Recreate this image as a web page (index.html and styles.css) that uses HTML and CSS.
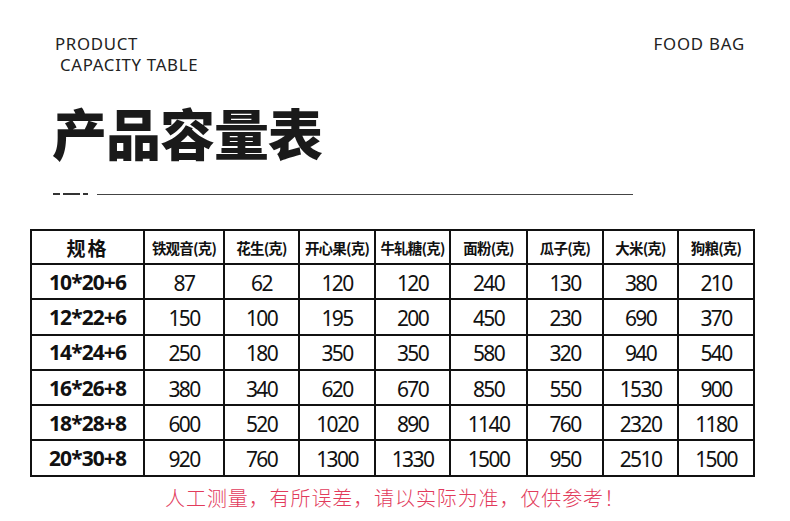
FILE: index.html
```html
<!DOCTYPE html>
<html lang="zh-CN">
<head>
<meta charset="utf-8">
<link rel="stylesheet" href="styles.css">
</head>
<body>
<div class="page">
  <header class="top">
    <div class="en-title">
      <div>PRODUCT</div>
      <div class="indent">CAPACITY TABLE</div>
    </div>
    <div class="brand">FOOD BAG</div>
  </header>
  <h1 class="title">产品容量表</h1>
  <div class="rule">
    <span class="dash d1"></span><span class="dash d2"></span><span class="dash d3"></span>
    <span class="line"></span>
  </div>
  <table class="cap">
    <colgroup>
      <col class="c0"><col class="c1"><col class="c2"><col class="c3"><col class="c4"><col class="c5"><col class="c6"><col class="c7"><col class="c8">
    </colgroup>
    <thead>
      <tr>
        <th class="spec-h">规格</th>
        <th>铁观音(克)</th><th>花生(克)</th><th>开心果(克)</th><th>牛轧糖(克)</th><th>面粉(克)</th><th>瓜子(克)</th><th>大米(克)</th><th>狗粮(克)</th>
      </tr>
    </thead>
    <tbody>
      <tr><td class="spec">10*20+6</td><td>87</td><td>62</td><td>120</td><td>120</td><td>240</td><td>130</td><td>380</td><td>210</td></tr>
      <tr><td class="spec">12*22+6</td><td>150</td><td>100</td><td>195</td><td>200</td><td>450</td><td>230</td><td>690</td><td>370</td></tr>
      <tr><td class="spec">14*24+6</td><td>250</td><td>180</td><td>350</td><td>350</td><td>580</td><td>320</td><td>940</td><td>540</td></tr>
      <tr><td class="spec">16*26+8</td><td>380</td><td>340</td><td>620</td><td>670</td><td>850</td><td>550</td><td>1530</td><td>900</td></tr>
      <tr><td class="spec">18*28+8</td><td>600</td><td>520</td><td>1020</td><td>890</td><td>1140</td><td>760</td><td>2320</td><td>1180</td></tr>
      <tr><td class="spec">20*30+8</td><td>920</td><td>760</td><td>1300</td><td>1330</td><td>1500</td><td>950</td><td>2510</td><td>1500</td></tr>
    </tbody>
  </table>
  <p class="note">人工测量，有所误差，请以实际为准，仅供参考！</p>
</div>
</body>
</html>
```
FILE: styles.css
```css
html, body {
  margin: 0;
  padding: 0;
  background: #fff;
}
body {
  font-family: "Noto Sans", "Noto Sans CJK SC", sans-serif;
  color: #111;
}
.page {
  width: 790px;
  height: 521px;
  overflow: hidden;
  position: relative;
}
.top {
  display: flex;
  justify-content: space-between;
  padding: 33px 45px 0 55px;
}
.en-title {
  font-size: 16.8px;
  line-height: 21px;
  letter-spacing: 0.7px;
  color: #222;
}
.en-title .indent {
  padding-left: 5px;
}
.brand {
  font-size: 16.8px;
  line-height: 21px;
  letter-spacing: 0.8px;
  color: #222;
}
.title {
  margin: 26px 0 0 52px;
  font-family: "Noto Sans CJK SC", sans-serif;
  font-weight: 900;
  font-size: 55px;
  line-height: 60px;
  letter-spacing: -1px;
  color: #1a1a1a;
}
.rule {
  display: flex;
  align-items: center;
  margin: 31px 0 0 53px;
  width: 580px;
  height: 4px;
}
.dash {
  height: 2px;
  background: #333;
  margin-right: 3px;
}
.d1 { width: 7px; }
.d2 { width: 17px; }
.d3 { width: 5px; margin-right: 9px; }
.line {
  flex: 1;
  height: 1px;
  background: #444;
}
.cap {
  margin: 33px 0 0 30px;
  border-collapse: collapse;
  table-layout: fixed;
  width: 724px;
  border: 2px solid #111;
}
.c0 { width: 113px; }
.c1 { width: 80px; }
.c2 { width: 75px; }
.c3 { width: 76px; }
.c4 { width: 75px; }
.c5 { width: 77px; }
.c6 { width: 76px; }
.c7 { width: 75px; }
.c8 { width: 76px; }
.cap th, .cap td {
  border: 2px solid #111;
  padding: 0;
  text-align: center;
  white-space: nowrap;
  overflow: hidden;
}
.cap th {
  height: 32px;
  font-family: "Noto Sans CJK SC", sans-serif;
  font-weight: 700;
  font-size: 14.5px;
  letter-spacing: -0.8px;
  color: #111;
}
.cap th.spec-h {
  font-size: 19px;
  letter-spacing: 2px;
}
.cap td {
  height: 31.3px;
  font-family: "Noto Sans", sans-serif;
  font-size: 21px;
  letter-spacing: -1.6px;
  color: #111;
  padding-top: 2px;
}
.cap td.spec {
  font-weight: 700;
  font-size: 21px;
  letter-spacing: -0.9px;
  padding-top: 0;
}
.note {
  margin: 8px 0 0 0;
  text-align: center;
  font-family: "Noto Sans CJK SC", sans-serif;
  font-weight: 300;
  font-size: 20px;
  letter-spacing: 0.9px;
  line-height: 26px;
  color: #e23b5c;
}
```
